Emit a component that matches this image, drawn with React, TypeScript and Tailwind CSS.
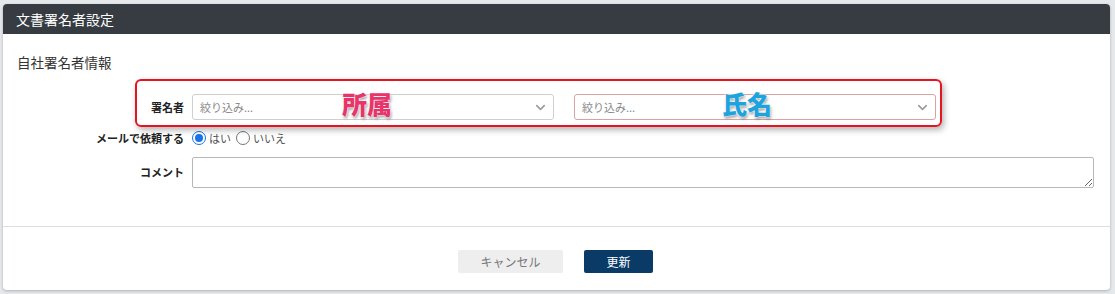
import { ChevronDown } from "lucide-react";

const jp = { fontFamily: '"Noto Sans CJK JP", "Noto Sans", sans-serif' };

const SelectBox = ({ red }: { red?: boolean }) => (
  <div
    className={`flex h-[26px] w-[362px] items-center justify-between rounded-[3px] border bg-white pl-[7px] pr-[5px] ${
      red ? "border-[#d9a3a3]" : "border-[#cfcfcf]"
    }`}
  >
    <span className="text-[11px] text-[#8a8a8a]">絞り込み...</span>
    <ChevronDown size={15} strokeWidth={2.5} className="text-[#9a9a9a]" />
  </div>
);

const Radio = ({ checked, label }: { checked?: boolean; label: string }) => (
  <label className="flex items-center gap-[3px]">
    <span
      className={`flex h-[14px] w-[14px] items-center justify-center rounded-full border ${
        checked ? "border-[#1a73e8]" : "border-[#767676]"
      } bg-white`}
    >
      {checked && <span className="h-[8px] w-[8px] rounded-full bg-[#1a73e8]" />}
    </span>
    <span className="text-[11px] text-[#555]">{label}</span>
  </label>
);

export default function App() {
  return (
    <div className="h-[294px] w-[1115px] bg-[#e6e9ec] pt-[4px]" style={jp}>
      <div className="relative ml-[3px] w-[1107px] rounded-[4px] bg-white shadow-[0_1px_3px_rgba(0,0,0,0.25)]">
        <div className="flex h-[30px] items-center rounded-t-[4px] bg-[#363c42] pl-[13px] text-[14px] text-white">
          文書署名者設定
        </div>

        <div className="pb-[38px] pt-[18px]">
          <div className="pl-[14px] text-[13.5px] leading-[20px] text-[#333]">自社署名者情報</div>

          <div className="mt-[22px] flex items-center">
            <div className="w-[181px] text-right text-[11px] font-bold text-[#222]">署名者</div>
            <div className="ml-[8px] flex gap-[20px]">
              <SelectBox />
              <SelectBox red />
            </div>
          </div>

          <div className="mt-[10px] flex h-[16px] items-center">
            <div className="w-[181px] text-right text-[11px] font-bold text-[#222]">メールで依頼する</div>
            <div className="ml-[8px] flex items-center gap-[5px]">
              <Radio checked label="はい" />
              <Radio label="いいえ" />
            </div>
          </div>

          <div className="mt-[11px] flex items-center">
            <div className="w-[181px] text-right text-[11px] font-bold text-[#222]">コメント</div>
            <textarea className="ml-[8px] h-[31px] w-[902px] resize-y rounded-[2px] border border-[#b8b8b8] outline-none" />
          </div>
        </div>

        <div className="border-t border-[#dedede] pb-[17px] pt-[23px]">
          <div className="flex justify-center gap-[21px] pr-[2px]">
            <button className="h-[23px] w-[105px] rounded-[2px] bg-[#eeeeee] text-[12px] text-[#777]">キャンセル</button>
            <button className="h-[23px] w-[69px] rounded-[2px] bg-[#0a3a66] text-[12px] text-white">更新</button>
          </div>
        </div>

        <div className="pointer-events-none absolute left-[132px] top-[75px] h-[48px] w-[807px] rounded-[6px] border-2 border-[#e6141e] shadow-[2px_3px_6px_rgba(0,0,0,0.3)]" />
        <div
          className="pointer-events-none absolute left-[339px] top-[85px] text-[25px] font-black leading-[28px] text-[#e8336b]"
          style={{ textShadow: "0 0 2px #fff, 0 0 2px #fff, 1px 2px 3px rgba(0,0,0,0.45)" }}
        >
          所属
        </div>
        <div
          className="pointer-events-none absolute left-[719px] top-[85px] text-[25px] font-black leading-[28px] text-[#1ea3de]"
          style={{ textShadow: "0 0 2px #fff, 0 0 2px #fff, 1px 2px 3px rgba(0,0,0,0.45)" }}
        >
          氏名
        </div>
      </div>
    </div>
  );
}
